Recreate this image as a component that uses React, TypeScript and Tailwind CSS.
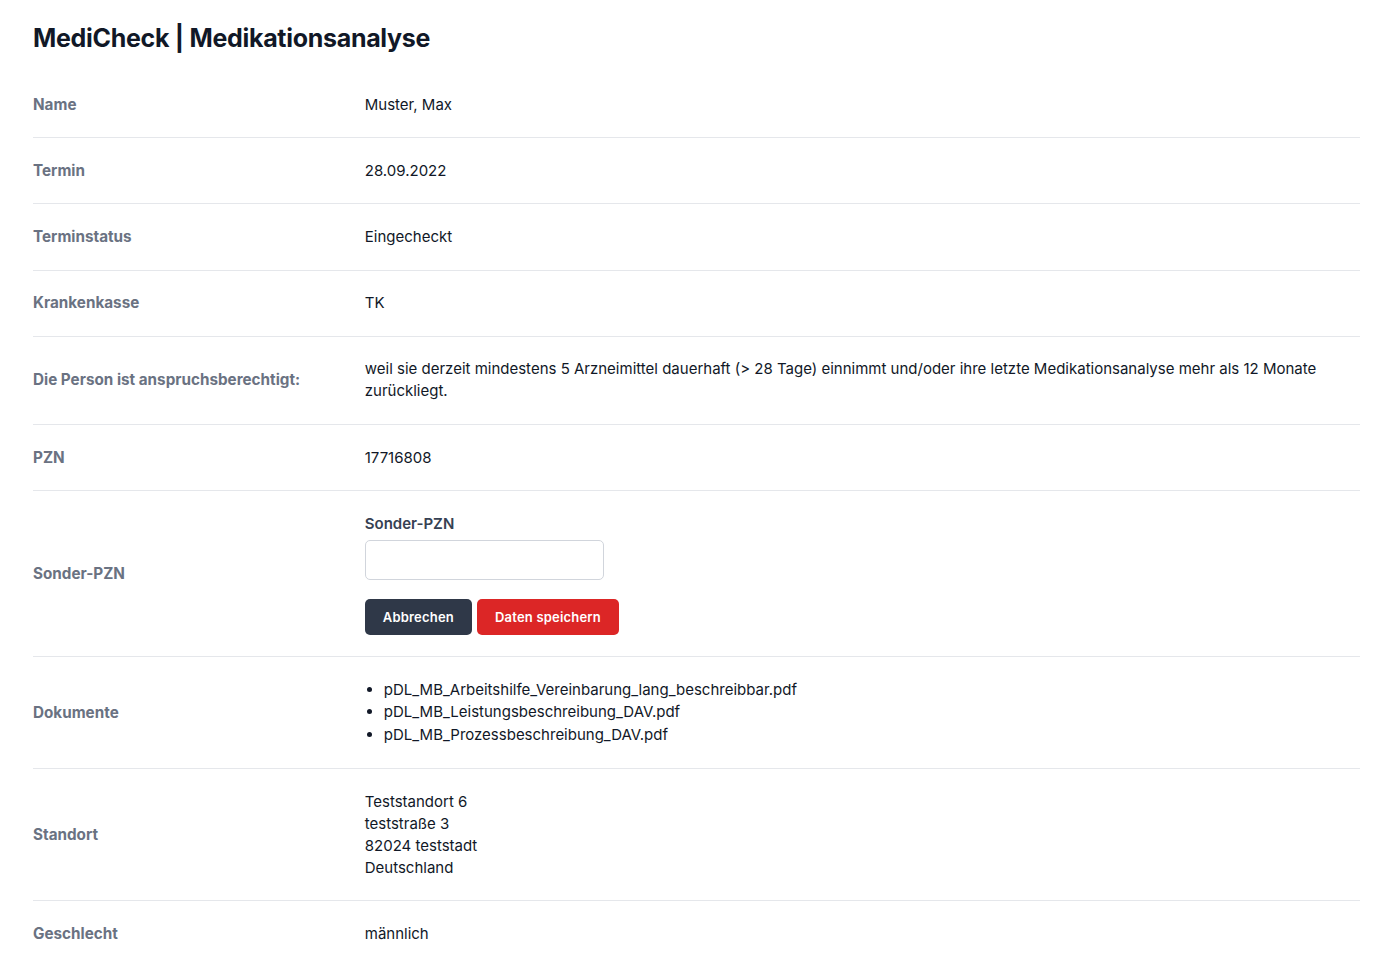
import React from 'react';

type Row = {
  label: string;
  value: React.ReactNode;
};

function SonderPznForm() {
  return (
    <div>
      <label className="block text-[15px] font-semibold leading-[22px] text-gray-700">Sonder-PZN</label>
      <input
        type="text"
        className="mt-[5px] block h-[40px] w-[239px] rounded-[5px] border border-gray-300 bg-white px-3 text-[15px] outline-none"
      />
      <div className="mt-[19px] flex gap-[5px]">
        <button className="h-[36px] rounded-[5px] bg-[#2f3848] px-[18px] text-[13px] font-semibold tracking-[0.2px] text-white">
          Abbrechen
        </button>
        <button className="h-[36px] rounded-[5px] bg-[#dc2626] px-[18px] text-[13px] font-semibold tracking-[0.2px] text-white">
          Daten speichern
        </button>
      </div>
    </div>
  );
}

export default function App() {
  const rows: Row[] = [
    { label: 'Name', value: 'Muster, Max' },
    { label: 'Termin', value: '28.09.2022' },
    { label: 'Terminstatus', value: 'Eingecheckt' },
    { label: 'Krankenkasse', value: 'TK' },
    {
      label: 'Die Person ist anspruchsberechtigt:',
      value:
        'weil sie derzeit mindestens 5 Arzneimittel dauerhaft (> 28 Tage) einnimmt und/oder ihre letzte Medikationsanalyse mehr als 12 Monate zurückliegt.',
    },
    { label: 'PZN', value: '17716808' },
    { label: 'Sonder-PZN', value: <SonderPznForm /> },
    {
      label: 'Dokumente',
      value: (
        <ul className="list-disc pl-[19px] leading-[22.5px]">
          <li>pDL_MB_Arbeitshilfe_Vereinbarung_lang_beschreibbar.pdf</li>
          <li>pDL_MB_Leistungsbeschreibung_DAV.pdf</li>
          <li>pDL_MB_Prozessbeschreibung_DAV.pdf</li>
        </ul>
      ),
    },
    {
      label: 'Standort',
      value: (
        <div>
          <div>Teststandort 6</div>
          <div>teststraße 3</div>
          <div>82024 teststadt</div>
          <div>Deutschland</div>
        </div>
      ),
    },
    { label: 'Geschlecht', value: 'männlich' },
  ];

  return (
    <div className="min-h-screen bg-white pl-[33px] pr-[40px] font-['Inter',sans-serif] text-[#111827]">
      <h1 className="pt-[22px] pb-[18px] text-[25px] font-bold leading-[32px] tracking-[-0.3px]">
        MediCheck | Medikationsanalyse
      </h1>
      <dl>
        {rows.map((row, i) => (
          <div
            key={row.label}
            className={
              'grid grid-cols-4 items-center py-[21.6px] ' +
              (i < rows.length - 1 ? 'border-b border-gray-200' : '')
            }
          >
            <dt className="text-[15.25px] font-bold leading-[22px] text-gray-500">{row.label}</dt>
            <dd className="col-span-3 text-[15px] leading-[22px] text-[#111827]">{row.value}</dd>
          </div>
        ))}
      </dl>
    </div>
  );
}
